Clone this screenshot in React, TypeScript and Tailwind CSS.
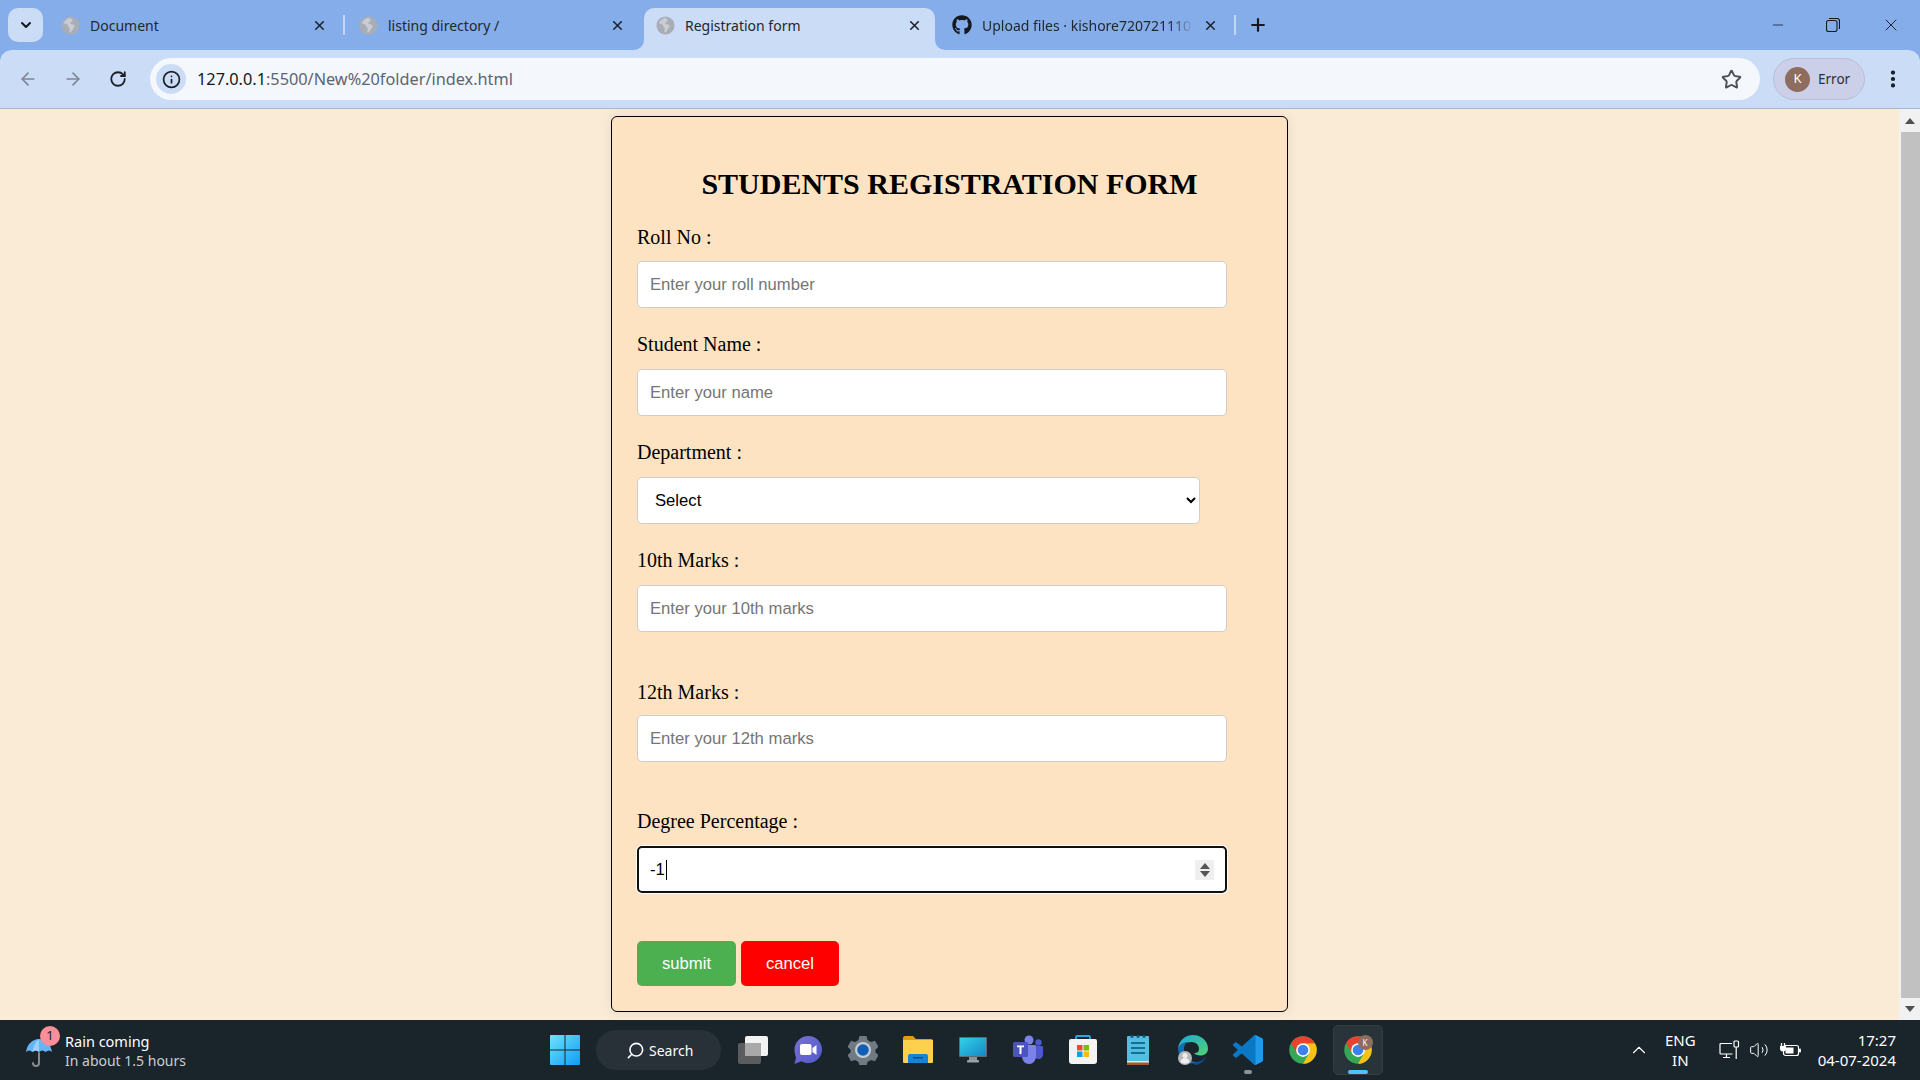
import { ArrowLeft, ArrowRight, ChevronDown, ChevronUp, Info, Minus, MoreVertical, Plus, RotateCw, Search, Star, Volume2, X } from 'lucide-react';
import { FaGithub } from 'react-icons/fa';

const ui = "[font-family:'Noto_Sans',sans-serif]";
const arial = "[font-family:'Liberation_Sans',Arial,sans-serif]";

const GlobeIcon = () => (
    <svg width="19" height="19" viewBox="0 0 20 20" className="shrink-0">
        <circle cx="10" cy="10" r="9.5" fill="#a9aeb6" />
        <path d="M10 1.5c-2 .5-3 2-4.5 2.5L3 7c1 1.500 3 1 4 2.500s1 2.500 2 3.500-1 3 0 4.500c3-1 3-3 4-4.500s2-1.500 1-3-3-1-4-2 1-2 2-2.500 0-2.500-2-3z" fill="#c9cdd3" />
    </svg>
);

const ChromeLogo = () => (
    <svg width="30" height="30" viewBox="0 0 48 48" className="shrink-0">
        <circle cx="24" cy="24" r="22" fill="#34a853" />
        <path d="M43.050 13A22 22 0 0 1 24 46L33.500 29.500 24 13z" fill="#fbc116" />
        <path d="M43.050 13A22 22 0 0 0 4.950 13L14.500 29.500 24 13z" fill="#e8432e" />
        <circle cx="24" cy="24" r="11" fill="#fff" />
        <circle cx="24" cy="24" r="8.500" fill="#3b82ec" />
    </svg>
);

const StartIcon = () => (
    <svg width="30" height="30" viewBox="0 0 30 30">
        <defs>
            <linearGradient id="start" x1="0" y1="0" x2="1" y2="1">
                <stop offset="0" stopColor="#6fe3fb" />
                <stop offset="1" stopColor="#0f9cf5" />
            </linearGradient>
        </defs>
        <path d="M0 1a1 1 0 0 1 1-1h13.500v14.500H0zM15.500 0H29a1 1 0 0 1 1 1v13.500H15.500zM0 15.500h14.500V30H1a1 1 0 0 1-1-1zM15.500 15.500H30V29a1 1 0 0 1-1 1H15.500z" fill="url(#start)" />
    </svg>
);

const TaskViewIcon = () => (
    <svg width="30" height="28" viewBox="0 0 30 28">
        <rect x="0" y="7" width="23" height="21" rx="2" fill="#5b5c5d" />
        <rect x="7" y="0" width="23" height="20" rx="2" fill="#f2f2f2" />
        <rect x="7" y="7" width="16" height="13" fill="#a9a9a9" />
    </svg>
);

const MeetIcon = () => (
    <svg width="30" height="30" viewBox="0 0 30 30">
        <defs>
            <linearGradient id="meet" x1="0" y1="0" x2="1" y2="1">
                <stop offset="0" stopColor="#7b70d6" />
                <stop offset="1" stopColor="#5059c9" />
            </linearGradient>
        </defs>
        <path d="M15.500 1C23 1 29 7 29 14.500S23 28 15.500 28c-2.500 0-5-.6-7-1.800L1.500 29 3 22.500C2.200 20 1.500 17.500 1.500 14.500 1.500 7 8 1 15.500 1z" fill="url(#meet)" />
        <rect x="7" y="9" width="11.500" height="11" rx="2" fill="#fff" />
        <path d="M19.500 13l4-3v10l-4-3z" fill="#fff" />
    </svg>
);

const GearIcon = () => (
    <svg width="30" height="30" viewBox="0 0 30 30">
        <path d="M11.500 1h7l1 4 3.500 2 4-1.200 3.400 6-3 2.900v2.600l3 2.900-3.400 6-4-1.200-3.500 2-1 4h-7l-1-4-3.500-2-4 1.200-3.400-6 3-2.900v-2.600l-3-2.900 3.400-6 4 1.200 3.500-2z" fill="#707a83" />
        <circle cx="15" cy="15" r="8" fill="#c7ccd1" />
        <circle cx="15" cy="15" r="5.800" fill="#0f5fb4" />
    </svg>
);

const FolderIcon = () => (
    <svg width="30" height="28" viewBox="0 0 30 28">
        <path d="M0 2a2 2 0 0 1 2-2h8l3 3h15a2 2 0 0 1 2 2v4H0z" fill="#d99f0d" />
        <path d="M0 4h30v22a1 1 0 0 1-1 1H1a1 1 0 0 1-1-1z" fill="#fdd14e" />
        <path d="M5 20a2 2 0 0 1 2-2h16a2 2 0 0 1 2 2v7H5z" fill="#1384d6" />
        <rect x="10" y="21" width="10" height="1.500" fill="#0a4f8c" />
    </svg>
);

const MonitorIcon = () => (
    <svg width="28" height="26" viewBox="0 0 28 26">
        <defs>
            <linearGradient id="screen" x1="0" y1="0" x2="1" y2="1">
                <stop offset="0" stopColor="#31d2e6" />
                <stop offset="1" stopColor="#1587c7" />
            </linearGradient>
        </defs>
        <rect x="10" y="19" width="8" height="4" fill="#8b9298" />
        <rect x="8" y="23" width="12" height="2.500" rx="1" fill="#9aa1a7" />
        <rect x="0" y="0" width="28" height="20" rx="1" fill="#5d6a73" />
        <rect x="1" y="1" width="26" height="18" fill="url(#screen)" />
    </svg>
);

const TeamsIcon = () => (
    <svg width="30" height="30" viewBox="0 0 30 30">
        <circle cx="16" cy="5" r="4.500" fill="#7b83eb" />
        <circle cx="25.500" cy="7.500" r="3.200" fill="#5059c9" />
        <path d="M21 11h8a1 1 0 0 1 1 1v7c0 3-2 5-4.500 5-1 0-2-.3-3-1z" fill="#5059c9" />
        <path d="M9 10h13a1 1 0 0 1 1 1v10c0 4.500-3 8-7 8s-7-3.500-7-8z" fill="#7b83eb" />
        <rect x="0" y="7" width="15" height="15" rx="1.500" fill="#4b53bc" />
        <path d="M4 10.500h7v1.800H8.500V19h-2v-6.700H4z" fill="#fff" />
    </svg>
);

const StoreIcon = () => (
    <svg width="30" height="30" viewBox="0 0 30 30">
        <path d="M8 5V2a1 1 0 0 1 1-1h12a1 1 0 0 1 1 1v3" fill="none" stroke="#2aa7e8" strokeWidth="1.800" />
        <path d="M1 6a2 2 0 0 1 2-2h24a2 2 0 0 1 2 2v20a3 3 0 0 1-3 3H4a3 3 0 0 1-3-3z" fill="#f3f3f3" />
        <rect x="9" y="10" width="5.500" height="5.500" fill="#ea4f2a" />
        <rect x="15.500" y="10" width="5.500" height="5.500" fill="#7fba00" />
        <rect x="9" y="16.500" width="5.500" height="5.500" fill="#00a4ef" />
        <rect x="15.500" y="16.500" width="5.500" height="5.500" fill="#ffb900" />
    </svg>
);

const NotepadIcon = () => (
    <svg width="22" height="30" viewBox="0 0 22 30">
        <rect x="0" y="1" width="22" height="26" rx="1" fill="#55bddf" />
        <rect x="0" y="26" width="22" height="4" fill="#a35a26" />
        <rect x="0" y="26" width="22" height="1.500" fill="#dce9ee" />
        <circle cx="5" cy="1.500" r="1.500" fill="#0f5f86" />
        <circle cx="11" cy="1.500" r="1.500" fill="#0f5f86" />
        <circle cx="17" cy="1.500" r="1.500" fill="#0f5f86" />
        <path d="M4 8h14M4 13h14M4 18h14" stroke="#146f97" strokeWidth="1.800" />
    </svg>
);

const EdgeIcon = () => (
    <svg width="30" height="30" viewBox="0 0 30 30">
        <defs>
            <linearGradient id="edgeA" x1="0" y1="0" x2="1" y2="1">
                <stop offset="0" stopColor="#1ea7d8" />
                <stop offset="1" stopColor="#52d46f" />
            </linearGradient>
        </defs>
        <path d="M15 0c9 0 15 6.500 15 13.500 0 4.500-3.500 7-7.500 7-3 0-5.500-1-6.500-2.500 3 .5 5-1.500 5-4 0-4-3-7-7.500-7C7 7 1.500 10 0 14 .5 6 7 0 15 0z" fill="url(#edgeA)" />
        <path d="M0 14c1-4 5-7 9-7-2 2-3 4-3 7 0 6 4 12 11 13 2 .3 4 0 5.500-.5A15 15 0 0 1 0 14z" fill="#0f6fb5" />
        <path d="M17 27c3 .3 8-1 11-5.500-1 4-6 8.500-11 8.500z" fill="#0c4f94" />
        <circle cx="7" cy="23" r="7" fill="#b9b9b9" />
        <circle cx="7" cy="20.500" r="2.500" fill="#efefef" />
        <path d="M2.500 27a4.500 4 0 0 1 9 0 7 7 0 0 1-9 0z" fill="#efefef" />
    </svg>
);

const VSCodeIcon = () => (
    <svg width="30" height="30" viewBox="0 0 100 100">
        <path d="M70.900 99.300a6.200 6.200 0 0 0 5-.2l20.600-9.900a6.200 6.200 0 0 0 3.500-5.600V16.400a6.200 6.200 0 0 0-3.500-5.600L75.900.9a6.200 6.200 0 0 0-7.100 1.200L29.400 38 12.200 25a4.200 4.200 0 0 0-5.300.2l-5.500 5a4.200 4.200 0 0 0 0 6.200L16.300 50 1.400 63.600a4.200 4.200 0 0 0 0 6.200l5.500 5a4.200 4.200 0 0 0 5.300.2l17.200-13 39.400 35.900c1 1 2.200 1.800 3.500 2.200zM75 27.300 45.100 50 75 72.700V27.300z" fill="#0b78c6" />
        <path d="M75 .4 96.500 10.800a6.200 6.200 0 0 1 3.500 5.600v67.200a6.200 6.200 0 0 1-3.500 5.600L75 99.600z" fill="#1c9bec" />
    </svg>
);

const UmbrellaIcon = () => (
    <svg width="26" height="30" viewBox="0 0 26 30">
        <path d="M13 15v10a3 3 0 0 1-6 0" fill="none" stroke="#8a8a8a" strokeWidth="2" strokeLinecap="round" />
        <path d="M0 14C1 6 7 1 13 1s12 5 13 13c-2-2-4-2-6.500 0-2-2-4.500-2-6.500 0-2-2-4.500-2-6.500 0C4 12 2 12 0 14z" fill="#64b4f6" />
        <path d="M13 1c-3 2-5.500 7-6.500 13 2-2 4.500-2 6.500 0z" fill="#9bd0fa" />
    </svg>
);

const NetworkIcon = () => (
    <svg width="21" height="20" viewBox="0 0 21 20" fill="none" stroke="#fff" strokeWidth="1.200">
        <path d="M13 3.500H2a1 1 0 0 0-1 1V13a1 1 0 0 0 1 1h11.500" />
        <path d="M7.500 14v3M4 17.500h7" />
        <rect x="15" y="1" width="4.500" height="6" rx="1" />
        <path d="M17.200 7v12" />
    </svg>
);

const BatteryIcon = () => (
    <svg width="21" height="16" viewBox="0 0 21 16" fill="none">
        <path d="M1.500 1v3M4.500 1v3" stroke="#fff" strokeWidth="1.300" />
        <path d="M0 4h6v2.500a3 3 0 0 1-6 0z" fill="#fff" />
        <rect x="3.500" y="3.500" width="15" height="10" rx="2" stroke="#fff" strokeWidth="1.200" />
        <rect x="5.500" y="5.500" width="8" height="6" fill="#fff" />
        <rect x="19" y="6.500" width="2" height="4" rx="1" fill="#fff" />
    </svg>
);

type TabProps = {
    title: string;
    icon?: React.ReactNode;
    active?: boolean;
    className: string;
    textClass?: string;
};

// one tab on the strip, widths come from the caller
const Tab = ({ title, icon, active, className, textClass }: TabProps) => (
    <div className={`relative flex h-[42px] items-start ${active ? 'rounded-t-[10px] bg-[#cbdcf6]' : ''} ${className}`}>
        <div className="flex h-[34px] w-full items-center">
            {icon ?? <GlobeIcon />}
            <span className={`min-w-0 flex-1 overflow-hidden whitespace-nowrap text-[14px] text-[#22272e] ${textClass ?? ''}`}>{title}</span>
            <X size={15} strokeWidth={2.6} className="shrink-0 text-[#1f2430]" />
        </div>
        {active && (
            <>
                <svg width="10" height="10" viewBox="0 0 10 10" className="absolute bottom-0 left-[-10px]">
                    <path d="M10 0v10H0A10 10 0 0 0 10 0z" fill="#cbdcf6" />
                </svg>
                <svg width="10" height="10" viewBox="0 0 10 10" className="absolute bottom-0 right-[-10px]">
                    <path d="M0 0v10h10A10 10 0 0 1 0 0z" fill="#cbdcf6" />
                </svg>
            </>
        )}
    </div>
);

const TabDivider = () => <div className="mb-[15px] h-[20px] w-[2px] shrink-0 bg-[#c5d6f2]" />;

const TabStrip = () => (
    <div className="flex h-[50px] shrink-0 items-end bg-[#85ade9]">
        <div className="mb-[8px] ml-[8px] flex h-[34px] w-[35px] items-center justify-center rounded-[10px] bg-[#cbdcf6]">
            <ChevronDown size={16} strokeWidth={3} className="text-[#14181f]" />
        </div>
        <Tab title="Document" className="w-[300px] pl-[18px] pr-[16px] [&>div>span]:ml-[10px]" />
        <TabDivider />
        <Tab title="listing directory /" className="w-[299px] pl-[14px] pr-[19px] [&>div>span]:ml-[10px]" />
        <Tab title="Registration form" active className="w-[291px] pl-[12px] pr-[13px] [&>div>span]:ml-[10px]" />
        <Tab
            title="Upload files · kishore720721110"
            icon={<FaGithub size={20} className="shrink-0 text-[#14181f]" />}
            className="w-[299px] pl-[17px] pr-[16px] [&>div>span]:ml-[10px]"
            textClass="mr-[10px] [mask-image:linear-gradient(to_left,transparent,black_24px)]"
        />
        <TabDivider />
        <Plus size={20} strokeWidth={2.6} className="mb-[15px] ml-[12px] text-[#14181f]" />
        <div className="mb-[15px] ml-auto flex items-center text-[#14181f]">
            <Minus size={20} strokeWidth={1} className="mr-[38px] scale-x-[0.8]" />
            <svg width="14" height="14" viewBox="0 0 14 14" fill="none" stroke="currentColor" strokeWidth="1.100" className="mr-[41px]">
                <rect x="0.500" y="2.500" width="10.500" height="11" rx="2" />
                <path d="M3 .5h8a2.500 2.500 0 0 1 2.500 2.500v8" />
            </svg>
            <X size={20} strokeWidth={1.1} className="mr-[19px]" />
        </div>
    </div>
);

const Toolbar = () => (
    <div className="flex h-[59px] shrink-0 items-center border-b border-[#a7b6d0] bg-[#85ade9]">
        <div className="flex h-[58px] w-full items-center rounded-t-[12px] bg-[#cbdcf6]">
            <ArrowLeft size={20} strokeWidth={2} className="ml-[18px] text-[#7d8794]" />
            <ArrowRight size={20} strokeWidth={2} className="ml-[25px] text-[#7d8794]" />
            <RotateCw size={18} strokeWidth={2.4} className="ml-[26px] text-[#1c2026]" />
            <div className="ml-[23px] flex h-[42px] w-[1610px] items-center rounded-full bg-[#f4f7fc] pl-[6px]">
                <div className="flex h-[30px] w-[30px] items-center justify-center rounded-full bg-[#cbdcf6]">
                    <Info size={19} strokeWidth={2.2} className="text-[#1c2026]" />
                </div>
                <span className="ml-[11px] text-[16.300px] text-[#5d6570]">
                    <span className="text-[#14181f]">127.0.0.1</span>:5500/New%20folder/index.html
                </span>
                <Star size={21} strokeWidth={2.2} className="ml-auto mr-[18px] text-[#4b5058]" />
            </div>
            <div className="ml-[13px] flex h-[42px] w-[92px] items-center rounded-full border border-[#b8c0d8] bg-[#cbcfe7] pl-[11px]">
                <div className="flex h-[25px] w-[25px] items-center justify-center rounded-full bg-[#8e6d5f] text-[13px] text-white">K</div>
                <span className="ml-[8px] text-[13.500px] text-[#2b3038]">Error</span>
            </div>
            <MoreVertical size={22} strokeWidth={2.6} className="ml-[17px] text-[#14181f]" />
        </div>
    </div>
);

const fieldLabel = "block h-[24px] text-[20px] leading-[24px] text-black";
const fieldInput = `block h-[47px] w-[590px] rounded-[5px] border border-[#cccccc] bg-white px-[12px] text-[16.670px] ${arial} placeholder:text-[#757575]`;

const RegistrationForm = () => (
    <form className="mx-auto mt-[7px] h-[896px] w-[677px] rounded-[6px] border border-black bg-[#fee3c2] pl-[25px] pr-[25px] pt-[49px] shadow-[0_0_12px_rgba(0,0,0,0.08)] [font-family:'Liberation_Serif','Times_New_Roman',serif]">
        <h2 className="h-[36px] text-center text-[30px] font-bold leading-[36px] text-black">STUDENTS REGISTRATION FORM</h2>

        <label className={`mt-[23px] ${fieldLabel}`}>Roll No :</label>
        <input className={`mt-[12px] ${fieldInput}`} placeholder="Enter your roll number" />

        <label className={`mt-[24px] ${fieldLabel}`}>Student Name :</label>
        <input className={`mt-[13px] ${fieldInput}`} placeholder="Enter your name" />

        <label className={`mt-[24px] ${fieldLabel}`}>Department :</label>
        <select className={`mt-[13px] block h-[47px] w-[563px] rounded-[5px] border border-[#cccccc] bg-white pl-[13px] pr-[3px] text-[16.670px] text-black ${arial}`}>
            <option>Select</option>
        </select>

        <label className={`mt-[24px] ${fieldLabel}`}>10th Marks :</label>
        <input className={`mt-[13px] ${fieldInput}`} placeholder="Enter your 10th marks" />

        <label className={`mt-[48px] ${fieldLabel}`}>12th Marks :</label>
        <input className={`mt-[11px] ${fieldInput}`} placeholder="Enter your 12th marks" />

        <label className={`mt-[47px] ${fieldLabel}`}>Degree Percentage :</label>
        {/* focused number field, caret and spinner drawn so they always show */}
        <div className={`mt-[13px] flex h-[47px] w-[590px] items-center rounded-[5px] border-[2.500px] border-[#101010] bg-white pl-[11px] pr-[11px] text-[16.670px] text-black shadow-[0_0_0_1px_#fff] ${arial}`}>
            <span>-1</span>
            <span className="ml-[1px] h-[20px] w-px bg-black" />
            <div className="ml-auto flex h-[20px] w-[19px] flex-col items-center justify-center gap-[2px] bg-[#efefef]">
                <svg width="10" height="6" viewBox="0 0 10 6"><path d="M5 0l5 6H0z" fill="#555" /></svg>
                <svg width="10" height="6" viewBox="0 0 10 6"><path d="M5 6L0 0h10z" fill="#555" /></svg>
            </div>
        </div>

        <div className={`mt-[48px] flex gap-[5px] text-[16.670px] text-white ${arial}`}>
            <button type="button" className="h-[45px] w-[99px] rounded-[5px] bg-[#4caf50]">submit</button>
            <button type="button" className="h-[45px] w-[98px] rounded-[5px] bg-[#ff0000]">cancel</button>
        </div>
    </form>
);

const Scrollbar = () => (
    <div className="flex w-[21px] shrink-0 flex-col bg-[#f1f1f1]">
        <div className="flex h-[23px] items-center justify-center">
            <svg width="10" height="6" viewBox="0 0 10 6"><path d="M5 0l5 6H0z" fill="#505050" /></svg>
        </div>
        <div className="ml-[2px] flex-1 bg-[#c1c1c1]" />
        <div className="flex h-[22px] items-center justify-center">
            <svg width="10" height="6" viewBox="0 0 10 6"><path d="M5 6L0 0h10z" fill="#505050" /></svg>
        </div>
    </div>
);

const taskbarIcons = [
    { id: 'taskview', icon: <TaskViewIcon /> },
    { id: 'meet', icon: <MeetIcon /> },
    { id: 'settings', icon: <GearIcon /> },
    { id: 'files', icon: <FolderIcon /> },
    { id: 'monitor', icon: <MonitorIcon /> },
    { id: 'teams', icon: <TeamsIcon /> },
    { id: 'store', icon: <StoreIcon /> },
    { id: 'notepad', icon: <NotepadIcon /> },
    { id: 'edge', icon: <EdgeIcon /> },
    { id: 'vscode', icon: <VSCodeIcon />, dot: true },
    { id: 'chrome', icon: <ChromeLogo /> },
];

const Taskbar = () => (
    <div className={`flex h-[60px] shrink-0 items-center bg-[#1a242b] text-white ${ui}`}>
        <div className="flex w-[540px] shrink-0 items-center pl-[26px]">
            <div className="relative h-[30px] w-[26px] translate-y-[3px]">
                <UmbrellaIcon />
                <span className="absolute left-[14px] top-[-12px] flex h-[20px] w-[20px] items-center justify-center rounded-full bg-[#fb8f98] text-[13px] text-[#1a1a1a]">1</span>
            </div>
            <div className="ml-[13px] flex translate-y-[1px] flex-col text-[14px] leading-[20px]">
                <span className="text-[14.500px]">Rain coming</span>
                <span className="text-[#c9ced2]">In about 1.5 hours</span>
            </div>
        </div>
        <div className="flex w-[50px] justify-center">
            <StartIcon />
        </div>
        <div className="ml-[6px] flex h-[40px] w-[125px] items-center rounded-full bg-[#283138] pl-[30px]">
            <Search size={19} strokeWidth={2} className="-scale-x-100 text-white" />
            <span className="ml-[4px] text-[14px]">Search</span>
        </div>
        <div className="ml-[4px] flex">
            {taskbarIcons.map((item) => (
                <div key={item.id} className="relative flex h-[60px] w-[55px] items-center justify-center">
                    {item.icon}
                    {item.dot && <span className="absolute bottom-[6px] h-[4px] w-[8px] rounded-full bg-[#8d9499]" />}
                </div>
            ))}
            <div className="relative flex h-[60px] w-[55px] items-center justify-center">
                <div className="absolute left-[3px] top-[5px] h-[50px] w-[50px] rounded-[5px] border border-[#333d44] bg-[#29333a]" />
                <div className="relative">
                    <ChromeLogo />
                    <span className="absolute right-0 top-0 flex h-[15px] w-[15px] items-center justify-center rounded-full bg-[#8e6d5f] text-[8px] text-white">K</span>
                </div>
                <span className="absolute bottom-[6px] left-[18px] h-[4px] w-[20px] rounded-full bg-[#4fc3f7]" />
            </div>
        </div>
        <div className="ml-auto flex items-center pr-[24px] text-[15px] leading-[20px]">
            <ChevronUp size={22} strokeWidth={1.200} className="mr-[15px]" />
            <div className="mr-[23px] flex flex-col items-center">
                <span>ENG</span>
                <span>IN</span>
            </div>
            <NetworkIcon />
            <Volume2 size={20} strokeWidth={1.200} className="ml-[9px]" />
            <div className="ml-[11px]"><BatteryIcon /></div>
            <div className="ml-[17px] flex flex-col items-end">
                <span>17:27</span>
                <span>04-07-2024</span>
            </div>
        </div>
    </div>
);

export default function App() {
    return (
        <div className={`flex h-screen w-full flex-col overflow-hidden ${ui}`}>
            <TabStrip />
            <Toolbar />
            <div className="flex min-h-0 flex-1 bg-[#faebd7]">
                <div className="flex-1">
                    <RegistrationForm />
                </div>
                <Scrollbar />
            </div>
            <Taskbar />
        </div>
    );
}
